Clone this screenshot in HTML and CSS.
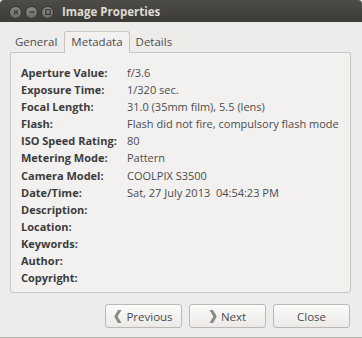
FILE: index.html
```html
<!DOCTYPE html>
<html lang="en">
  <head>
    <meta charset="UTF-8" />
    <title>Image Properties</title>
    <link rel="stylesheet" href="styles.css">
  </head>
  <body>
    <div class="window">
      <!-- title bar -->
      <div class="titlebar">
        <div class="controls">
          <span class="ctl close-ctl">
            <svg width="6" height="6" viewBox="0 0 6 6"><path d="M1 1L5 5M5 1L1 5" stroke="#3a3935" stroke-width="1.2"/></svg>
          </span>
          <span class="ctl">
            <svg width="6" height="6" viewBox="0 0 6 6"><path d="M0.5 3H5.5" stroke="#3a3935" stroke-width="1.3"/></svg>
          </span>
          <span class="ctl">
            <svg width="6" height="6" viewBox="0 0 6 6"><rect x="0.7" y="0.7" width="4.6" height="4.6" fill="none" stroke="#3a3935" stroke-width="1.1"/></svg>
          </span>
        </div>
        <span class="title">Image Properties</span>
      </div>

      <div class="content">
        <!-- tabs -->
        <div class="tabs">
          <span class="tab">General</span>
          <span class="tab active">Metadata</span>
          <span class="tab">Details</span>
        </div>

        <!-- metadata table -->
        <div class="frame">
          <dl class="meta">
            <dt>Aperture Value:</dt><dd>f/3.6</dd>
            <dt>Exposure Time:</dt><dd>1/320 sec.</dd>
            <dt>Focal Length:</dt><dd>31.0 (35mm film), 5.5 (lens)</dd>
            <dt>Flash:</dt><dd>Flash did not fire, compulsory flash mode</dd>
            <dt>ISO Speed Rating:</dt><dd>80</dd>
            <dt>Metering Mode:</dt><dd>Pattern</dd>
            <dt>Camera Model:</dt><dd>COOLPIX S3500</dd>
            <dt>Date/Time:</dt><dd>Sat, 27 July 2013&nbsp; 04:54:23 PM</dd>
            <dt>Description:</dt><dd></dd>
            <dt>Location:</dt><dd></dd>
            <dt>Keywords:</dt><dd></dd>
            <dt>Author:</dt><dd></dd>
            <dt>Copyright:</dt><dd></dd>
          </dl>
        </div>

        <!-- buttons -->
        <div class="actions">
          <button type="button" class="btn">
            <svg class="arrow" width="8" height="13" viewBox="0 0 8 13"><polygon points="7.5,0 3.6,6.5 7.5,13 4,13 0.2,6.5 4,0" fill="#8a8985"/></svg>
            Previous
          </button>
          <button type="button" class="btn">
            <svg class="arrow" width="8" height="13" viewBox="0 0 8 13"><polygon points="0.5,0 4.4,6.5 0.5,13 4,13 7.8,6.5 4,0" fill="#8a8985"/></svg>
            Next
          </button>
          <button type="button" class="btn">Close</button>
        </div>
      </div>
    </div>
  </body>
</html>
```

FILE: styles.css
```css
/* window */
html,
body {
  margin: 0;
  padding: 0;
}

body {
  font-family: "Open Sans", "Noto Sans", sans-serif;
  font-size: 11px;
  color: #3c3c3c;
}

.window {
  width: 362px;
  height: 338px;
  background-color: #edeceb;
  border-bottom: 1px solid #b9b7b3;
  box-sizing: border-box;
  overflow: hidden;
}

/* title bar */
.titlebar {
  height: 22px;
  display: flex;
  align-items: center;
  background: linear-gradient(#4d4c48, #3c3b37);
  border-radius: 4px 4px 0 0;
  padding-left: 9px;
}

.controls {
  display: flex;
  gap: 3px;
  margin-top: 2px;
}

.ctl {
  width: 11px;
  height: 11px;
  border-radius: 50%;
  background: linear-gradient(#8a8983, #6b6a65);
  border: 1px solid #35342f;
  display: flex;
  justify-content: center;
  align-items: center;
}

.title {
  margin-left: 8px;
  margin-top: 1px;
  color: #dfdbd2;
  font-weight: bold;
  font-size: 11.5px;
}

/* body */
.content {
  padding: 9px 11px 0 10px;
}

.tabs {
  display: flex;
  align-items: flex-end;
  height: 21px;
  padding-left: 1px;
  position: relative;
  z-index: 1;
}

.tab {
  padding: 0 5px 3px 4px;
  color: #4c4c4c;
  font-size: 11.5px;
  line-height: 14px;
}

.tab.active {
  box-sizing: border-box;
  padding: 2px 6px 0 6px;
  margin: 0 2px -1px 2px;
  border: 1px solid #c9c6c1;
  border-bottom: none;
  border-radius: 3px 3px 0 0;
  background-color: #f2f1f0;
  line-height: 16px;
  height: 22px;
}

.frame {
  height: 241px;
  box-sizing: border-box;
  border: 1px solid #c9c6c1;
  border-radius: 0 2px 3px 3px;
  background-color: #f2f1f0;
  padding: 11px 0 0 10px;
}

/* metadata rows */
.meta {
  margin: 0;
  display: grid;
  grid-template-columns: 106px 1fr;
  line-height: 17.1px;
}

.meta dt {
  font-weight: bold;
  color: #3c3c3c;
  white-space: nowrap;
}

.meta dd {
  margin: 0;
  color: #4c4c4c;
  white-space: nowrap;
}

/* buttons */
.actions {
  display: flex;
  justify-content: flex-end;
  gap: 7px;
  margin-top: 11px;
  padding-right: 1px;
}

.btn {
  width: 77px;
  height: 24px;
  display: flex;
  justify-content: center;
  align-items: center;
  gap: 4px;
  font-family: inherit;
  font-size: 11.5px;
  color: #4c4c4c;
  background: linear-gradient(#fbfbfa, #ebeae8);
  border: 1px solid #bcb9b4;
  border-radius: 3px;
  padding: 0;
}

.arrow {
  margin-top: 1px;
}
```
